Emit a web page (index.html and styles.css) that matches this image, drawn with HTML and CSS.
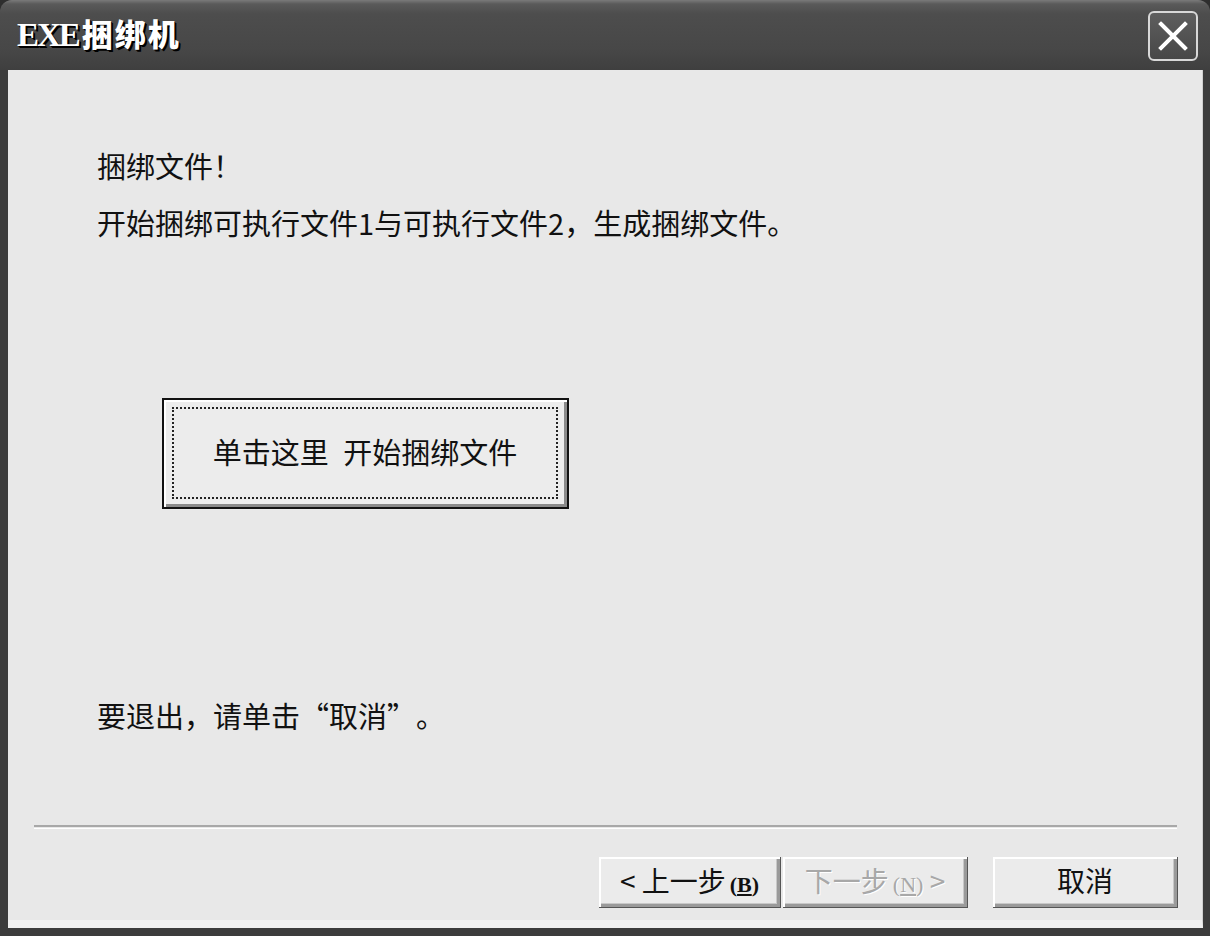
FILE: index.html
```html
<!DOCTYPE html>
<html lang="zh-CN">
<head>
<meta charset="utf-8">
<title>EXE捆绑机</title>
<link rel="stylesheet" href="styles.css">
</head>
<body>
<div class="window">
  <div class="titlebar">
    <div class="title"><span class="latin">EXE</span><span class="cjk">捆绑机</span></div>
    <button class="close" aria-label="关闭">
      <svg width="30" height="30" viewBox="0 0 30 30"><path d="M3 3 L27 27 M27 3 L3 27" stroke="#fff" stroke-width="4" stroke-linecap="square"/></svg>
    </button>
  </div>
  <div class="client">
    <div class="body">
      <p class="line heading">捆绑文件！</p>
      <p class="line desc">开始捆绑可执行文件1与可执行文件2，生成捆绑文件。</p>
      <button class="bigbtn"><span class="focus">单击这里&ensp;开始捆绑文件</span></button>
      <p class="line exit">要退出，请单击<span class="q open">“</span>取消<span class="q close-q">”</span>。</p>
    </div>
    <div class="sep"></div>
    <div class="actions">
      <div class="pair">
        <button class="btn">&lt; 上一步<span class="acc">(<u>B</u>)</span></button>
        <button class="btn disabled">下一步<span class="acc">(<u>N</u>)</span> &gt;</button>
      </div>
      <button class="btn cancel">取消</button>
    </div>
  </div>
</div>
</body>
</html>
```
FILE: styles.css
```css
html, body {
  margin: 0;
  padding: 0;
  background: #2e2e2e;
}
body {
  width: 1210px;
  height: 936px;
  overflow: hidden;
  font-family: "Noto Sans CJK SC", "Liberation Sans", sans-serif;
}
.window {
  width: 1210px;
  height: 936px;
  display: flex;
  flex-direction: column;
  background: #3c3c3c;
  border-radius: 12px 12px 0 0;
  overflow: hidden;
}
.titlebar {
  height: 70px;
  flex: none;
  display: flex;
  align-items: center;
  justify-content: space-between;
  padding: 0 12px 0 17px;
  background: linear-gradient(#7a7a7a 0, #5a5a5a 4px, #4d4d4d 14px, #474747 50px, #3f3f3f 70px);
}
.title {
  color: #fff;
  font-weight: bold;
  line-height: 40px;
  text-shadow: 2px 2px 0 #000, 1px 1px 0 #000;
  margin-top: 2px;
}
.title .latin {
  font-family: "Liberation Serif", serif;
  font-size: 33px;
  letter-spacing: -2px;
  margin-right: 3px;
}
.title .cjk {
  font-family: "Noto Sans CJK SC", sans-serif;
  font-size: 31px;
  letter-spacing: 2px;
  font-weight: 900;
}
.close {
  width: 50px;
  height: 50px;
  margin-top: 2px;
  padding: 0;
  display: flex;
  align-items: center;
  justify-content: center;
  border: 2px solid #d8d8d8;
  border-radius: 6px;
  background: linear-gradient(#5e5e5e, #474747);
}
.client {
  flex: 1;
  margin: 0 7px 8px 8px;
  background: #e8e8e8;
  border-right: 1px solid #cfcfcf;
  border-bottom: 8px solid #f0f0f0;
  display: flex;
  flex-direction: column;
}
.body {
  flex: 1;
  padding: 77px 0 0 89px;
}
.line {
  margin: 0;
  font-size: 29px;
  line-height: 36px;
  color: #111;
}
.desc {
  margin-top: 21px;
}
.bigbtn {
  display: flex;
  margin: 158px 0 0 65px;
  width: 407px;
  height: 111px;
  padding: 7px 9px 8px 8px;
  border: 2px solid #111;
  background: #ececec;
  box-shadow: inset 2px 2px 0 #fff, inset -3px -3px 0 #8a8a8a;
  font-family: "Noto Sans CJK SC", sans-serif;
}
.bigbtn .focus {
  flex: 1;
  display: flex;
  align-items: center;
  justify-content: center;
  border: 2px dotted #222;
  font-size: 29px;
  color: #111;
  padding: 0 0 4px 0;
}
.exit {
  margin-top: 188px;
}
.q {
  display: inline-block;
  width: 1em;
}
.q.open {
  text-align: right;
}
.q.close-q {
  text-align: left;
}
.sep {
  flex: none;
  height: 1px;
  margin: 0 25px 0 26px;
  border-top: 2px solid #a8a8a8;
  border-bottom: 1px solid #fff;
}
.actions {
  flex: none;
  display: flex;
  justify-content: flex-end;
  gap: 25px;
  padding: 28px 24px 12px 0;
}
.pair {
  display: flex;
  gap: 2px;
}
.btn {
  width: 182px;
  height: 51px;
  padding: 0 0 4px;
  font-family: "Noto Sans CJK SC", sans-serif;
  font-size: 28px;
  color: #111;
  background: #ebebeb;
  border: none;
  box-shadow: inset 2px 2px 0 #fff, inset -3px -3px 0 #9a9a9a, inset -4px -4px 0 #c8c8c8;
  border-right: 1px solid #555;
  border-bottom: 1px solid #555;
}
.btn .acc {
  font-size: 22px;
  font-family: "Liberation Serif", serif;
  font-weight: bold;
  margin-left: 4px;
}
.btn.disabled {
  width: 185px;
  color: #a8a8a8;
  text-shadow: 1px 1px 0 #fff;
}
.btn.disabled .acc {
  font-weight: normal;
}
.btn.cancel {
  width: 185px;
}
```
